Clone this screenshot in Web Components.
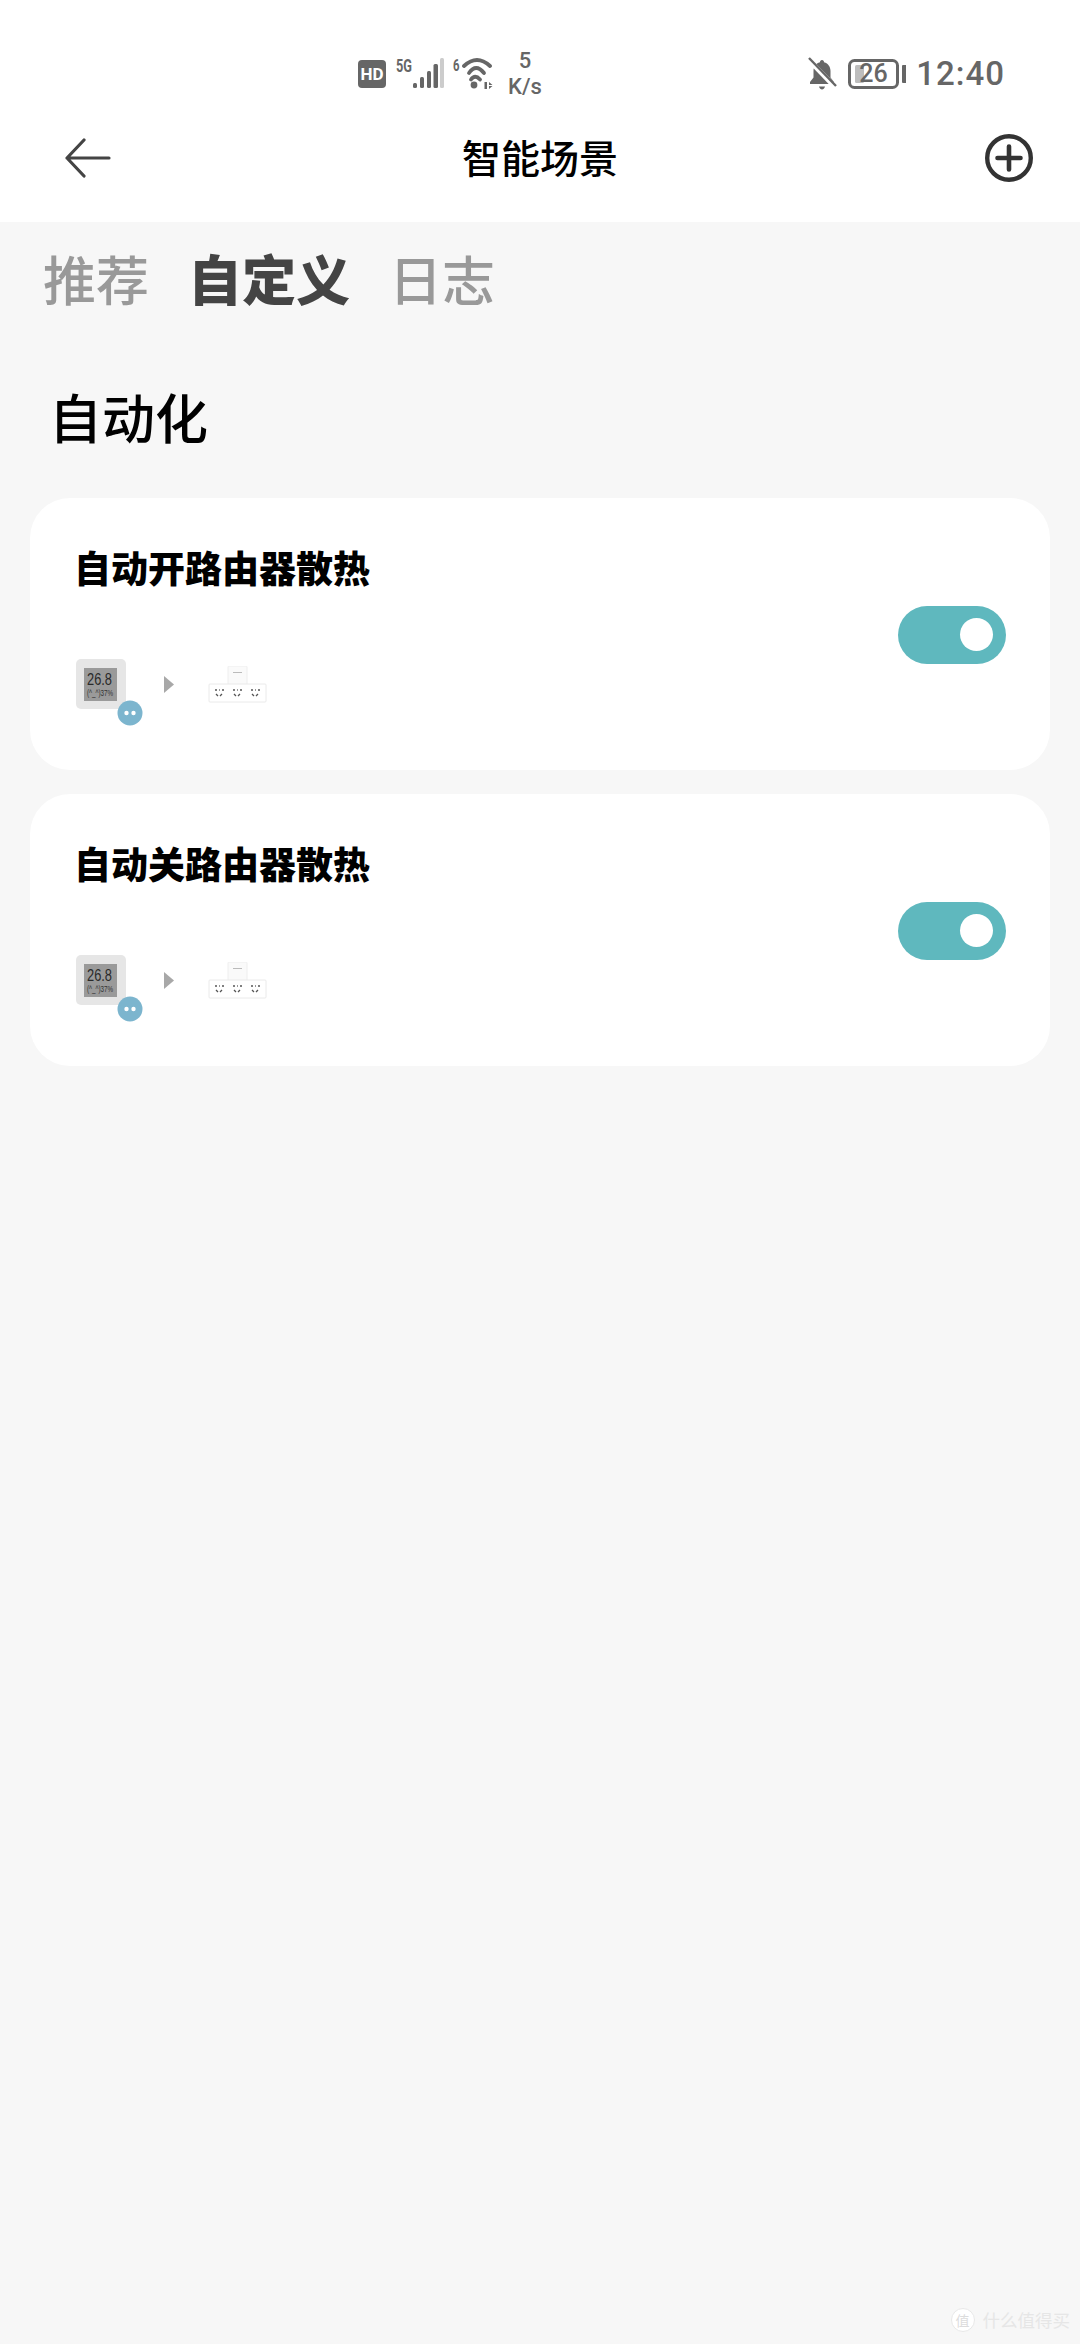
<!DOCTYPE html>
<html lang="zh">
<head>
<meta charset="utf-8">
<title>智能场景</title>
<style>
html, body { margin: 0; background: #f7f7f7; }
body {
    width: 1080px;
    height: 2344px;
    overflow: hidden;
    font-family: "Noto Sans CJK SC", "Noto Sans", sans-serif;
}
</style>
</head>
<body>
<x-status-bar></x-status-bar>
<x-title-bar title="智能场景"></x-title-bar>
<x-tabs>
    <span>推荐</span>
    <span class="on">自定义</span>
    <span>日志</span>
</x-tabs>
<x-section title="自动化">
    <x-scene-card title="自动开路由器散热"></x-scene-card>
    <x-scene-card title="自动关路由器散热"></x-scene-card>
</x-section>
<x-watermark></x-watermark>

<script>
'use strict';

class StatusBar extends HTMLElement {
    constructor() {
        super();
        this.attachShadow({mode: 'open'}).innerHTML = /*html*/`
        <style>
        :host {
            box-sizing: border-box;
            display: flex;
            justify-content: space-between;
            align-items: center;
            height: 112px;
            padding: 36px 75px 0 358px;
            background: #fff;
            color: #666;
            font-family: "Roboto", "Noto Sans", sans-serif;
        }
        .group { display: flex; align-items: center; }
        svg { display: block; }
        .speed {
            margin-left: -3px;
            width: 36px;
            text-align: center;
            font-size: 22px;
            line-height: 26px;
            font-weight: 500;
            white-space: nowrap;
            display: flex;
            flex-direction: column;
            align-items: center;
        }
        .time {
            margin-left: 10px;
            font-size: 33px;
            line-height: 38px;
            font-weight: 500;
            letter-spacing: 1px;
        }
        </style>
        <div class="group">
            <svg width="152" height="44" viewBox="0 0 152 44" fill="#666" font-family="Roboto">
                <rect x="0" y="8" width="28" height="28" rx="4"/>
                <text x="14" y="28" font-size="17" font-weight="700" fill="#fff" text-anchor="middle">HD</text>
                <text x="38" y="20" font-size="19" font-weight="700" textLength="16" lengthAdjust="spacingAndGlyphs">5G</text>
                <rect x="55" y="31" width="4" height="5" rx="1.500"/>
                <rect x="62" y="25" width="4" height="11" rx="1.500"/>
                <rect x="69" y="19" width="4" height="17" rx="1.500"/>
                <rect x="75.500" y="12" width="4.500" height="24" rx="1.500"/>
                <rect x="82" y="6" width="4" height="30" rx="1.500" fill="#ccc"/>
                <text x="95" y="19" font-size="17" font-weight="700" textLength="6.500" lengthAdjust="spacingAndGlyphs">6</text>
                <g fill="none" stroke="#666" stroke-width="3.800" stroke-linecap="round">
                    <path d="M106 14Q119 2 132 14"/>
                    <path d="M111 21Q118 11 126 21"/>
                    <path d="M113 27.500Q117 22 122 27.500"/>
                </g>
                <circle cx="116" cy="33" r="3.400"/>
                <path d="M126.500 30h2.500v7h-2.500zM131 30l3.500 3h-3.500zM131 37v-3h3.500z"/>
            </svg>
            <div class="speed"><span>5</span><span>K/s</span></div>
        </div>
        <div class="group">
            <svg width="98" height="44" viewBox="0 0 98 44" fill="#666" font-family="Roboto">
                <path d="M14 8c-1.400 0-2 1-2 2.200C7.500 11.500 5.500 15 5.500 19v6.500L2 30v2h24v-2l-3.500-4.500V19c0-4-2-7.500-6.500-8.800C16 9 15.400 8 14 8z"/>
                <path d="M11 34.500h6c-.5 2-1.800 3-3 3s-2.500-1-3-3z"/>
                <path d="M1 8l26 27" stroke="#fff" stroke-width="5"/>
                <path d="M1 6l27 28" stroke="#666" stroke-width="2.400"/>
                <rect x="41.500" y="8.500" width="48" height="27" rx="5" fill="none" stroke="#666" stroke-width="3"/>
                <rect x="47" y="13" width="9" height="18" rx="1.500" fill="#bdbdbd"/>
                <text x="65.500" y="30" font-size="25" font-weight="500" text-anchor="middle">26</text>
                <rect x="94" y="13" width="4.500" height="18" rx="1"/>
            </svg>
            <div class="time">12:40</div>
        </div>
        `;
    }
}

class TitleBar extends HTMLElement {
    constructor() {
        super();
        this.attachShadow({mode: 'open'}).innerHTML = /*html*/`
        <style>
        :host {
            box-sizing: border-box;
            display: grid;
            grid-template-columns: 1fr auto 1fr;
            align-items: center;
            height: 110px;
            padding: 0 47px 18px 65px;
            background: #fff;
        }
        h1 {
            margin: 0 18px 4px 0;
            font-size: 39px;
            font-weight: 500;
            color: #000;
        }
        svg { display: block; }
        .add { justify-self: end; }
        </style>
        <svg width="46" height="40" viewBox="0 0 46 40" fill="none" stroke="#444" stroke-width="3.200" stroke-linecap="round" stroke-linejoin="round">
            <path d="M19 2L2 20l17 18M2 20h42"/>
        </svg>
        <h1 class="js-title"></h1>
        <svg class="add" width="48" height="48" viewBox="0 0 48 48" fill="none" stroke="#333" stroke-linecap="round">
            <circle cx="24" cy="24" r="21.800" stroke-width="4.400"/>
            <path d="M24 12.500v23M12.500 24h23" stroke-width="4.600"/>
        </svg>
        `;
    }

    connectedCallback() {
        this.shadowRoot.querySelector('.js-title').textContent = this.getAttribute('title');
        this.removeAttribute('title');
    }
}

class Tabs extends HTMLElement {
    constructor() {
        super();
        this.attachShadow({mode: 'open'}).innerHTML = /*html*/`
        <style>
        :host {
            display: flex;
            gap: 39px;
            height: 84px;
            margin-top: 14px;
            padding: 0 0 0 43px;
            align-items: center;
            font-size: 53px;
            line-height: 80px;
            font-weight: 500;
            color: #999;
        }
        ::slotted(.on) {
            color: #444;
            font-size: 54px;
            font-weight: 900;
        }
        </style>
        <slot></slot>
        `;
    }
}

class Section extends HTMLElement {
    constructor() {
        super();
        this.attachShadow({mode: 'open'}).innerHTML = /*html*/`
        <style>
        :host {
            display: block;
            padding: 0 30px;
        }
        h2 {
            margin: 0;
            padding: 57px 0 43px 19px;
            font-size: 53px;
            line-height: 78px;
            font-weight: 500;
            color: #000;
        }
        .list {
            display: flex;
            flex-direction: column;
            gap: 24px;
        }
        </style>
        <h2 class="js-title"></h2>
        <div class="list"><slot></slot></div>
        `;
    }

    connectedCallback() {
        this.shadowRoot.querySelector('.js-title').textContent = this.getAttribute('title');
        this.removeAttribute('title');
    }
}

class SceneCard extends HTMLElement {
    constructor() {
        super();
        this.attachShadow({mode: 'open'}).innerHTML = /*html*/`
        <style>
        :host {
            box-sizing: border-box;
            display: flex;
            justify-content: space-between;
            align-items: flex-start;
            height: 272px;
            padding: 43px 44px 0 46px;
            background: #fff;
            border-radius: 40px;
        }
        h3 {
            margin: 0 0 66px -2px;
            font-size: 37px;
            line-height: 52px;
            font-weight: 900;
            color: #000;
        }
        .flow {
            display: flex;
            align-items: flex-start;
        }
        .flow svg { display: block; }
        .toggle {
            position: relative;
            width: 108px;
            height: 58px;
            margin-top: 65px;
            border-radius: 29px;
            background: #5fb8be;
        }
        .toggle::after {
            content: '';
            position: absolute;
            right: 13px;
            top: 12px;
            width: 33px;
            height: 33px;
            border-radius: 50%;
            background: #fff;
        }
        </style>
        <div>
            <h3 class="js-title"></h3>
            <div class="flow">
                <svg width="68" height="68" viewBox="0 0 68 68">
                    <rect x="0" y="0" width="50" height="50" rx="5" fill="#e6e6e6"/>
                    <rect x="8" y="9" width="33" height="33" fill="#9a9a9a"/>
                    <text x="11" y="26" font-size="17" font-family="Liberation Sans" fill="#2a2a2a" textLength="25" lengthAdjust="spacingAndGlyphs">26.8</text>
                    <text x="11" y="36.500" font-size="9" font-family="Liberation Sans" fill="#333" textLength="26" lengthAdjust="spacingAndGlyphs">(^_^)37%</text>
                    <circle cx="54" cy="54" r="12.500" fill="#7cb5ce"/>
                    <circle cx="50.500" cy="54" r="2.200" fill="#fff"/>
                    <circle cx="57.500" cy="54" r="2.200" fill="#fff"/>
                </svg>
                <svg width="10" height="17" viewBox="0 0 10 17" style="margin:17px 0 0 20px">
                    <path d="M0 0l10 8.500-10 8.500z" fill="#a8a8a8"/>
                </svg>
                <svg width="60" height="40" viewBox="0 0 60 40" style="margin:7px 0 0 34px">
                    <rect x="20" y="0" width="19" height="19" rx="1" fill="#fafafa" stroke="#eee"/>
                    <rect x="25" y="6" width="9" height="1" fill="#bbb"/>
                    <rect x="1" y="18" width="57" height="18" rx="1" fill="#fff" stroke="#eaeaea"/>
                    <g fill="none" stroke="#555" stroke-width="1.300">
                        <path d="M7 24h2M11 24h0.800M14 24h2M8 28l2 2 M14 28l-2 2"/>
                        <path d="M25 24h2M29 24h0.800M32 24h2M26 28l2 2 M32 28l-2 2"/>
                        <path d="M43 24h2M47 24h0.800M50 24h2M44 28l2 2 M50 28l-2 2"/>
                    </g>
                </svg>
            </div>
        </div>
        <div class="toggle"></div>
        `;
    }

    connectedCallback() {
        this.shadowRoot.querySelector('.js-title').textContent = this.getAttribute('title');
        this.removeAttribute('title');
    }
}

class Watermark extends HTMLElement {
    constructor() {
        super();
        this.attachShadow({mode: 'open'}).innerHTML = /*html*/`
        <style>
        :host {
            position: absolute;
            right: 10px;
            bottom: 10px;
            display: flex;
            align-items: center;
            gap: 8px;
            color: #e6e6e6;
            font-size: 17.500px;
            line-height: 28px;
        }
        .mark {
            box-sizing: border-box;
            width: 24px;
            height: 24px;
            border-radius: 50%;
            background: #fff;
            border: 1px solid #e8e8e8;
            color: #dcdcdc;
            font-size: 14px;
            line-height: 22px;
            text-align: center;
        }
        </style>
        <span class="mark">值</span>
        <span>什么值得买</span>
        `;
    }
}

customElements.define('x-status-bar', StatusBar);
customElements.define('x-title-bar', TitleBar);
customElements.define('x-tabs', Tabs);
customElements.define('x-section', Section);
customElements.define('x-scene-card', SceneCard);
customElements.define('x-watermark', Watermark);
</script>
</body>
</html>
